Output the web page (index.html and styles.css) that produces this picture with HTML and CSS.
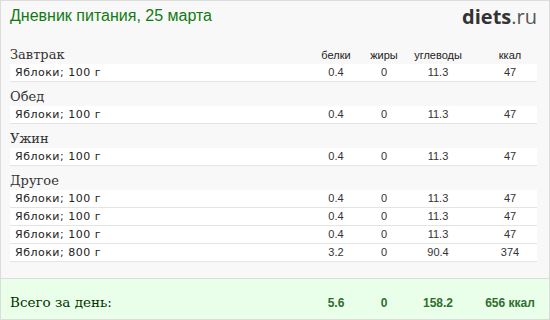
FILE: index.html
```html
<!DOCTYPE html>
<html lang="ru">
<head>
<meta charset="utf-8">
<title>Дневник питания</title>
<link rel="stylesheet" href="styles.css">
</head>
<body>
<div class="page">
  <header class="top">
    <h1 class="title">Дневник питания, 25 марта</h1>
    <div class="logo"><b>diets</b>.ru</div>
  </header>
  <main class="content">
    <section class="meal">
      <div class="meal-head grid">
        <span class="meal-name">Завтрак</span>
        <span class="col hd">белки</span>
        <span class="col hd">жиры</span>
        <span class="col hd">углеводы</span>
        <span class="col hd">ккал</span>
      </div>
      <div class="row grid"><span class="food">Яблоки; 100 г</span><span class="col">0.4</span><span class="col">0</span><span class="col">11.3</span><span class="col">47</span></div>
    </section>
    <section class="meal">
      <div class="meal-head grid"><span class="meal-name">Обед</span></div>
      <div class="row grid"><span class="food">Яблоки; 100 г</span><span class="col">0.4</span><span class="col">0</span><span class="col">11.3</span><span class="col">47</span></div>
    </section>
    <section class="meal">
      <div class="meal-head grid"><span class="meal-name">Ужин</span></div>
      <div class="row grid"><span class="food">Яблоки; 100 г</span><span class="col">0.4</span><span class="col">0</span><span class="col">11.3</span><span class="col">47</span></div>
    </section>
    <section class="meal">
      <div class="meal-head grid"><span class="meal-name">Другое</span></div>
      <div class="row grid"><span class="food">Яблоки; 100 г</span><span class="col">0.4</span><span class="col">0</span><span class="col">11.3</span><span class="col">47</span></div>
      <div class="row grid"><span class="food">Яблоки; 100 г</span><span class="col">0.4</span><span class="col">0</span><span class="col">11.3</span><span class="col">47</span></div>
      <div class="row grid"><span class="food">Яблоки; 100 г</span><span class="col">0.4</span><span class="col">0</span><span class="col">11.3</span><span class="col">47</span></div>
      <div class="row grid"><span class="food">Яблоки; 800 г</span><span class="col">3.2</span><span class="col">0</span><span class="col">90.4</span><span class="col">374</span></div>
    </section>
  </main>
  <footer class="totals grid">
    <span class="total-label">Всего за день:</span>
    <span class="col tv">5.6</span>
    <span class="col tv">0</span>
    <span class="col tv">158.2</span>
    <span class="col tv">656 ккал</span>
  </footer>
</div>
</body>
</html>
```

FILE: styles.css
```css
* { box-sizing: border-box; }
html, body { margin: 0; padding: 0; background: #f8f8f8; }
.page {
  width: 550px;
  height: 320px;
  border: 1px solid #dcdcdc;
  background: #f8f8f8;
  display: flex;
  flex-direction: column;
  overflow: hidden;
}
.top {
  height: 39px;
  display: flex;
  justify-content: space-between;
  align-items: flex-start;
  padding: 0 12px 0 9px;
}
.title {
  margin: 0;
  padding-top: 5px;
  font: normal 16px/20px "Liberation Sans", Arial, sans-serif;
  color: #127a12;
}
.logo {
  padding-top: 4px;
  font: normal 20px/24px "Open Sans", sans-serif;
  color: #555;
}
.logo b { font-weight: 700; color: #333; }
.content {
  padding: 0 12px 0 9px;
}
.grid {
  display: grid;
  grid-template-columns: 1fr 78px 18px 90px 54px;
  align-items: baseline;
}
.col {
  display: flex;
  justify-content: center;
  white-space: nowrap;
}
.meal-head {
  height: 24px;
  padding-top: 7px;
}
.meal-name {
  font: normal 13px/16px "DejaVu Serif", serif;
  color: #333;
}
.hd {
  font: normal 11px/16px "Liberation Sans", Arial, sans-serif;
  color: #222;
}
.row {
  height: 18px;
  background: #fff;
  border-bottom: 1px solid #e4e4e4;
  padding-left: 5px;
  font: normal 11px/17px "Liberation Sans", Arial, sans-serif;
  color: #333;
}
.food {
  font: normal 11px/17px "DejaVu Sans", Verdana, sans-serif;
  letter-spacing: 0.5px;
  color: #222;
}
.totals {
  margin-top: auto;
  height: 41px;
  border-top: 1px solid #dcdcdc;
  background: #eaffea;
  padding: 8px 12px 0 9px;
}
.total-label {
  font: normal 13.5px/30px "DejaVu Serif", serif;
  color: #003300;
}
.tv {
  font: bold 12px/30px "Liberation Sans", Arial, sans-serif;
  color: #2f6e2f;
}
```
